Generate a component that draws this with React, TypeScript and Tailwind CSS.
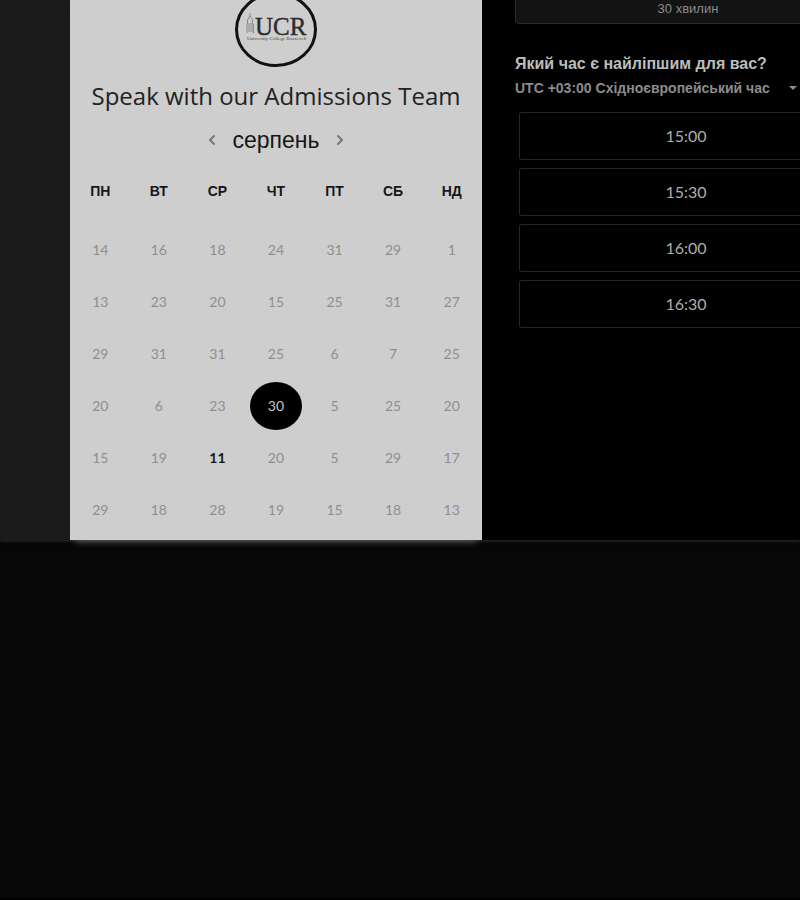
import { ChevronLeft, ChevronRight } from "lucide-react";

const weekdays = ["ПН", "ВТ", "СР", "ЧТ", "ПТ", "СБ", "НД"];

const weeks = [
  [14, 16, 18, 24, 31, 29, 1],
  [13, 23, 20, 15, 25, 31, 27],
  [29, 31, 31, 25, 6, 7, 25],
  [20, 6, 23, 30, 5, 25, 20],
  [15, 19, 11, 20, 5, 29, 17],
  [29, 18, 28, 19, 15, 18, 13],
];

const slots = ["15:00", "15:30", "16:00", "16:30"];

function Logo() {
  return (
    <svg className="-mt-2 h-[75px] w-[82px] shrink-0" viewBox="0 0 82 75" role="img" aria-label="UCR">
      <ellipse cx="41" cy="37.5" rx="39.5" ry="36" fill="none" stroke="#111111" strokeWidth="3" />
      <path
        d="M15 25v-4M12.500 32v-4l2.500-4 2.500 4v4M12 41v-9h6v9M14 40v-7M16 40v-7M18.500 41v-8"
        fill="none"
        stroke="#8a8a8a"
        strokeWidth="1"
      />
      <text x="20" y="43" fontSize="25" fill="#2b2b2b" stroke="#2b2b2b" strokeWidth="0.4" fontFamily="'Liberation Serif', serif">
        UCR
      </text>
      <text x="12" y="48" fontSize="5" fill="#444444" fontFamily="'Liberation Serif', serif">
        University College Roosevelt
      </text>
    </svg>
  );
}

function Day({ day, week, column }: { day: number; week: number; column: number }) {
  if (week === 3 && column === 3) {
    return (
      <button aria-pressed="true" className="mx-auto flex h-12 w-[52px] items-center justify-center rounded-[50%] bg-black text-[#c4c4c4]">
        {day}
      </button>
    );
  }
  if (week === 4 && column === 2) {
    return <button className="px-1 font-bold text-[#161616]">{day}</button>;
  }
  return <button className="px-1 text-[#8e8e8e]">{day}</button>;
}

function Calendar() {
  return (
    <section className="flex w-[412px] shrink-0 flex-col items-center bg-[#cecece] pb-1 shadow-[0_7px_6px_-5px_#555555]">
      <Logo />
      <h1 className="mt-[13px] whitespace-nowrap font-['Open_Sans',sans-serif] text-[24px] leading-8 text-[#222222]">
        Speak with our Admissions Team
      </h1>
      <div className="mt-3 flex h-8 items-center gap-3 text-[#777777]">
        <button aria-label="Попередній місяць">
          <ChevronLeft size={16} strokeWidth={3} />
        </button>
        <h2 className="font-['Liberation_Sans',sans-serif] text-[23px] leading-8 text-[#161616]">серпень</h2>
        <button aria-label="Наступний місяць">
          <ChevronRight size={16} strokeWidth={3} />
        </button>
      </div>
      <table className="mt-[2px] w-[410px] table-fixed text-center">
        <thead>
          <tr className="h-[66px]">
            {weekdays.map((name) => (
              <th key={name} scope="col" className="p-0 font-['Liberation_Sans',sans-serif] text-[14px] font-bold text-[#161616]">
                {name}
              </th>
            ))}
          </tr>
        </thead>
        <tbody className="font-['Lato',sans-serif] text-[14px] leading-5">
          {weeks.map((days, week) => (
            <tr key={week} className="h-[52px]">
              {days.map((day, column) => (
                <td key={column} className="p-0 align-middle">
                  <Day day={day} week={week} column={column} />
                </td>
              ))}
            </tr>
          ))}
        </tbody>
      </table>
    </section>
  );
}

function Times() {
  return (
    <section className="min-w-0 flex-1 overflow-hidden bg-black pl-[33px]">
      <div className="w-[346px]">
        <button className="block h-6 w-full rounded-b-sm border border-t-0 border-[#2a2a2a] bg-[#131313] pb-[6px] font-['Liberation_Sans',sans-serif] text-[13px] leading-4 text-[#8c8c8c]">
          30 хвилин
        </button>
        <h2 className="mt-[30px] font-['Liberation_Sans',sans-serif] text-[16px] leading-5 font-bold text-[#bdbdbd]">
          Який час є найліпшим для вас?
        </h2>
        <div className="mt-1 flex h-5 items-center gap-[2px] text-[#8c8c8c]">
          <select
            aria-label="Часовий пояс"
            className="w-[272px] appearance-none bg-transparent font-['Liberation_Sans',sans-serif] text-[14px] leading-5 font-bold"
          >
            <option>UTC +03:00 Східноєвропейський час</option>
          </select>
          <svg className="h-1 w-2" viewBox="0 0 8 4" fill="currentColor" aria-hidden="true">
            <path d="M0 0h8L4 4z" />
          </svg>
        </div>
        <div className="mt-[14px] mr-2 ml-1 flex flex-col gap-2 font-['Lato',sans-serif]">
          {slots.map((time) => (
            <button key={time} className="h-12 rounded-xs border border-[#262626] text-[16px] leading-5 text-[#adadad]">
              {time}
            </button>
          ))}
        </div>
      </div>
    </section>
  );
}

export default function App() {
  return (
    <main className="flex min-h-screen flex-col overflow-hidden border-b-2 border-black bg-[#070707]">
      <div className="flex bg-[#1b1b1b] pl-[70px] shadow-[0_1px_3px_#303030]">
        <Calendar />
        <Times />
      </div>
    </main>
  );
}
